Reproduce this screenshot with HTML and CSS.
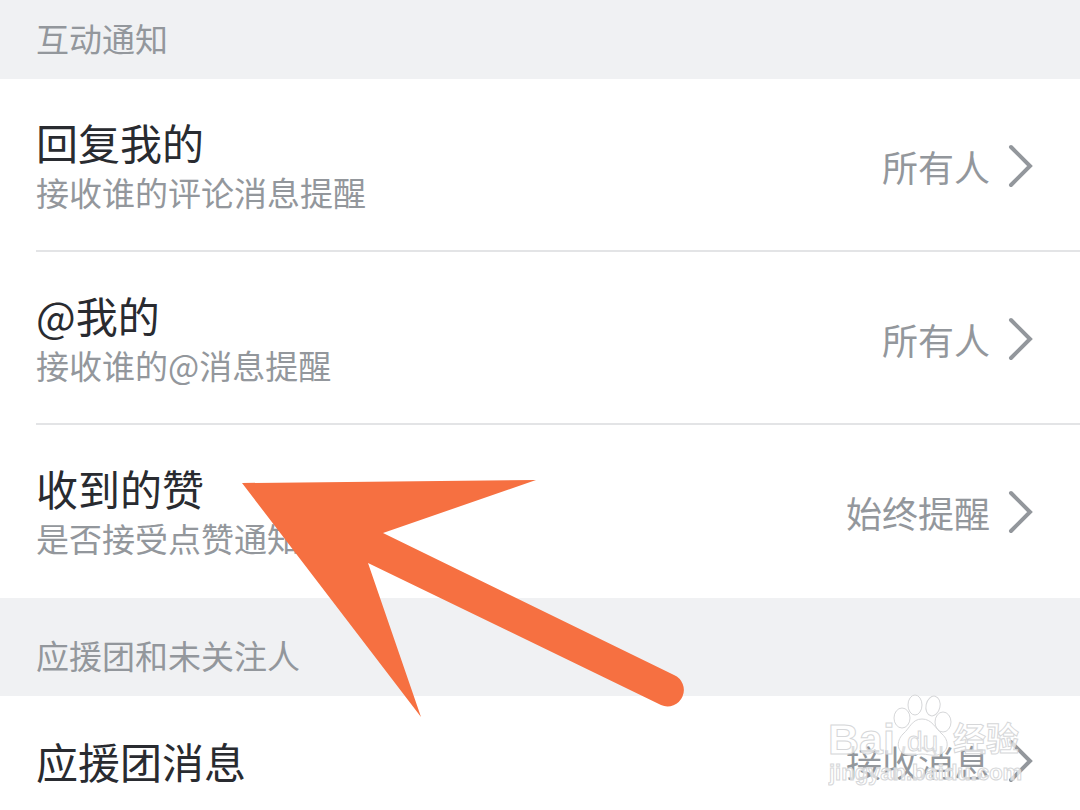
FILE: index.html
```html
<!DOCTYPE html>
<html lang="zh-CN">
<head>
  <meta charset="UTF-8" />
  <meta name="viewport" content="width=device-width, initial-scale=1.0" />
  <title>消息设置</title>
  <link rel="stylesheet" href="styles.css">
</head>
<body>
  <main class="page">
    <section>
      <h2 class="section-title">互动通知</h2>
      <a class="row" href="#reply">
        <span class="info">
          <span class="title">回复我的</span>
          <span class="desc">接收谁的评论消息提醒</span>
        </span>
        <span class="value">所有人</span>
        <svg class="chevron" viewBox="0 0 26 44" aria-hidden="true"><path d="M3 3 L22 22 L3 41" /></svg>
      </a>
      <a class="row" href="#at">
        <span class="info">
          <span class="title">@我的</span>
          <span class="desc">接收谁的@消息提醒</span>
        </span>
        <span class="value">所有人</span>
        <svg class="chevron" viewBox="0 0 26 44" aria-hidden="true"><path d="M3 3 L22 22 L3 41" /></svg>
      </a>
      <a class="row" href="#like">
        <span class="info">
          <span class="title">收到的赞</span>
          <span class="desc">是否接受点赞通知</span>
        </span>
        <span class="value">始终提醒</span>
        <svg class="chevron" viewBox="0 0 26 44" aria-hidden="true"><path d="M3 3 L22 22 L3 41" /></svg>
      </a>
    </section>

    <section>
      <h2 class="section-title spaced">应援团和未关注人</h2>
      <a class="row single" href="#group">
        <span class="info">
          <span class="title">应援团消息</span>
        </span>
        <span class="value">接收消息</span>
        <svg class="chevron" viewBox="0 0 26 44" aria-hidden="true"><path d="M3 3 L22 22 L3 41" /></svg>
      </a>
    </section>

    <!-- arrow pointing at the likes row -->
    <svg class="arrow" viewBox="0 0 446 240" aria-hidden="true">
      <path d="M2 5 L296 2 L143 55 L434 197 A16 16 0 0 1 421 227 L128 85 L181 239 Z" />
    </svg>

    <!-- watermark -->
    <svg class="watermark" viewBox="0 0 200 100">
      <g class="paw">
        <ellipse cx="74" cy="24" rx="8" ry="10" />
        <ellipse cx="87" cy="11" rx="7" ry="10" />
        <ellipse cx="105" cy="12" rx="7" ry="10" transform="rotate(12 105 12)" />
        <ellipse cx="115" cy="28" rx="8" ry="10" />
        <path d="M94 25 C104 25 107 34 114 40 C122 47 121 59 109 61 C103 62 99 60 94 60 C89 60 86 62 80 61 C68 59 68 47 75 40 C82 34 84 25 94 25 Z" />
      </g>
      <text class="brand" x="0" y="60">Bai</text>
      <text class="du" x="79" y="57">du</text>
      <text class="cn" x="125" y="57">经验</text>
      <text class="url" x="1" y="86">jingyan.baidu.com</text>
    </svg>
  </main>
</body>
</html>
```
FILE: styles.css
```css
* {
  box-sizing: border-box;
}

body {
  margin: 0;
  background-color: #fff;
  font-family: "Noto Sans CJK SC", sans-serif;
}

.page {
  position: relative;
  overflow: hidden;
}

.section-title {
  margin: 0;
  padding: 14px 36px 17px;
  background-color: #f0f1f3;
  color: #93979c;
  font-size: 33px;
  font-weight: 400;
  line-height: 48px;
}

.section-title.spaced {
  padding-top: 33px;
}

.row {
  display: flex;
  align-items: center;
  margin-left: 36px;
  padding: 37px 46px 34px 0;
  border-bottom: 2px solid #e3e4e6;
  color: #93979c;
  text-decoration: none;
}

.row:last-child {
  border-bottom-color: transparent;
}

.row.single {
  padding-top: 39px;
  padding-bottom: 21px;
}

.info {
  flex: 1;
  display: flex;
  flex-direction: column;
}

.title {
  color: #292b30;
  font-size: 42px;
  line-height: 52px;
}

.desc {
  font-size: 33px;
  line-height: 48px;
}

.value {
  font-size: 36px;
  line-height: 48px;
}

.chevron {
  width: 26px;
  height: 44px;
  margin-left: 18px;
  fill: none;
  stroke: #93979c;
  stroke-width: 4;
  stroke-linecap: round;
}

.arrow {
  position: absolute;
  left: 240px;
  top: 478px;
  width: 446px;
  height: 240px;
  fill: #f67041;
}

.watermark {
  position: absolute;
  right: 52px;
  bottom: 16px;
  width: 200px;
  height: 100px;
  fill: #fff;
  fill-opacity: 0.7;
  stroke: #d6d7d9;
  stroke-width: 1;
  font-family: "Liberation Sans", "Noto Sans CJK SC", sans-serif;
  font-weight: 700;
}

.brand {
  font-size: 43px;
}

.du {
  font-size: 28px;
  font-weight: 400;
}

.cn {
  font-size: 33px;
}

.url {
  font-size: 22px;
}
```
